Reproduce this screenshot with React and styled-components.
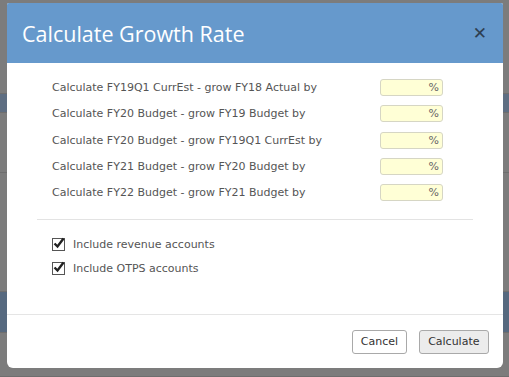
import React from "react";
import styled, { createGlobalStyle } from "styled-components";

const Global = createGlobalStyle`
  html, body { margin: 0; padding: 0; }
  body { font-family: "DejaVu Sans", Verdana, sans-serif; background: #7b7b7b; }
`;

const Page = styled.div`
  width: 509px;
  height: 377px;
  background: #7c7c7c;
  position: relative;
  overflow: hidden;
`;

const Backdrop = styled.div`
  position: absolute;
  inset: 0;
  display: flex;
  flex-direction: column;
`;

const BgBand = styled.div`
  height: ${(p) => p.h}px;
  background: ${(p) => p.c};
  border-bottom: 1px solid #6e6e6e;
`;

const Modal = styled.div`
  position: absolute;
  left: 7px;
  top: 3px;
  width: 496px;
  height: 365px;
  background: #fff;
  border-radius: 2px 2px 6px 6px;
  display: flex;
  flex-direction: column;
  overflow: hidden;
`;

const Header = styled.div`
  height: 60px;
  background: #6699cc;
  display: flex;
  align-items: center;
  justify-content: space-between;
  padding: 0 16px 0 15px;
  flex-shrink: 0;
`;

const Title = styled.h1`
  margin: 0;
  font-family: "Open Sans", sans-serif;
  font-weight: 400;
  font-size: 21.5px;
  color: #fff;
`;

const Close = styled.span`
  font-family: "DejaVu Sans", sans-serif;
  font-weight: 700;
  font-size: 17px;
  color: #2e3f52;
  line-height: 1;
`;

const Body = styled.div`
  flex: 1;
  padding: 16px 30px 0 30px;
  border-bottom: 1px solid #e5e5e5;
`;

const Rows = styled.div`
  display: flex;
  flex-direction: column;
  gap: 9.3px;
  padding: 0 0 0 15px;
`;

const Row = styled.div`
  display: grid;
  grid-template-columns: 328px 63px;
  align-items: center;
  height: 17px;
`;

const Label = styled.span`
  font-size: 11px;
  color: #555;
`;

const Pct = styled.div`
  height: 15px;
  border: 1px solid #d6d6c4;
  border-radius: 3px;
  background: #ffffd6;
  font-size: 11px;
  color: #666;
  display: flex;
  align-items: center;
  justify-content: flex-end;
  padding-right: 3px;
`;

const Divider = styled.hr`
  margin: 18px 0 0 0;
  border: 0;
  border-top: 1px solid #e3e3e3;
`;

const Checks = styled.div`
  padding: 17px 0 0 15px;
  display: flex;
  flex-direction: column;
  gap: 8.5px;
`;

const CheckRow = styled.label`
  display: flex;
  align-items: center;
  gap: 8px;
  font-size: 11px;
  color: #555;
  height: 15px;
`;

const Box = styled.span`
  width: 11px;
  height: 11px;
  border: 1px solid #555;
  background: #fff;
  position: relative;
  display: inline-block;
`;

const Footer = styled.div`
  height: 53px;
  display: flex;
  align-items: center;
  justify-content: flex-end;
  gap: 12px;
  padding: 0 14px 0 0;
  flex-shrink: 0;
`;

const Button = styled.button`
  font-family: "DejaVu Sans", sans-serif;
  font-size: 11px;
  color: #333;
  height: 24px;
  padding: 0 ${(p) => (p.primary ? 8.5 : 7.5)}px;
  border: 1px solid #a9a9a9;
  border-radius: 3px;
  background: ${(p) => (p.primary ? "#ececec" : "#fff")};
`;

const rows = [
  "Calculate FY19Q1 CurrEst - grow FY18 Actual by",
  "Calculate FY20 Budget - grow FY19 Budget by",
  "Calculate FY20 Budget - grow FY19Q1 CurrEst by",
  "Calculate FY21 Budget - grow FY20 Budget by",
  "Calculate FY22 Budget - grow FY21 Budget by",
];

const Check = () => (
  <Box>
    <svg width="14" height="14" viewBox="0 0 14 14" style={{ position: "absolute", left: -1, top: -3 }}>
      <path d="M2.5 7.5 L5.5 10.5 L11.5 2.5" fill="none" stroke="#222" strokeWidth="2.4" />
    </svg>
  </Box>
);

export default function App() {
  return (
    <Page>
      <Global />
      <Backdrop>
        <BgBand h={95} c="#7c7c7c" />
        <BgBand h={18} c="#5e6e82" />
        <BgBand h={60} c="#7c7c7c" />
        <BgBand h={120} c="#7c7c7c" />
        <BgBand h={40} c="#56697f" />
        <BgBand h={44} c="#7c7c7c" />
      </Backdrop>
      <Modal>
        <Header>
          <Title>Calculate Growth Rate</Title>
          <Close>✕</Close>
        </Header>
        <Body>
          <Rows>
            {rows.map((r) => (
              <Row key={r}>
                <Label>{r}</Label>
                <Pct>%</Pct>
              </Row>
            ))}
          </Rows>
          <Divider />
          <Checks>
            <CheckRow>
              <Check />
              Include revenue accounts
            </CheckRow>
            <CheckRow>
              <Check />
              Include OTPS accounts
            </CheckRow>
          </Checks>
        </Body>
        <Footer>
          <Button>Cancel</Button>
          <Button primary>Calculate</Button>
        </Footer>
      </Modal>
    </Page>
  );
}
